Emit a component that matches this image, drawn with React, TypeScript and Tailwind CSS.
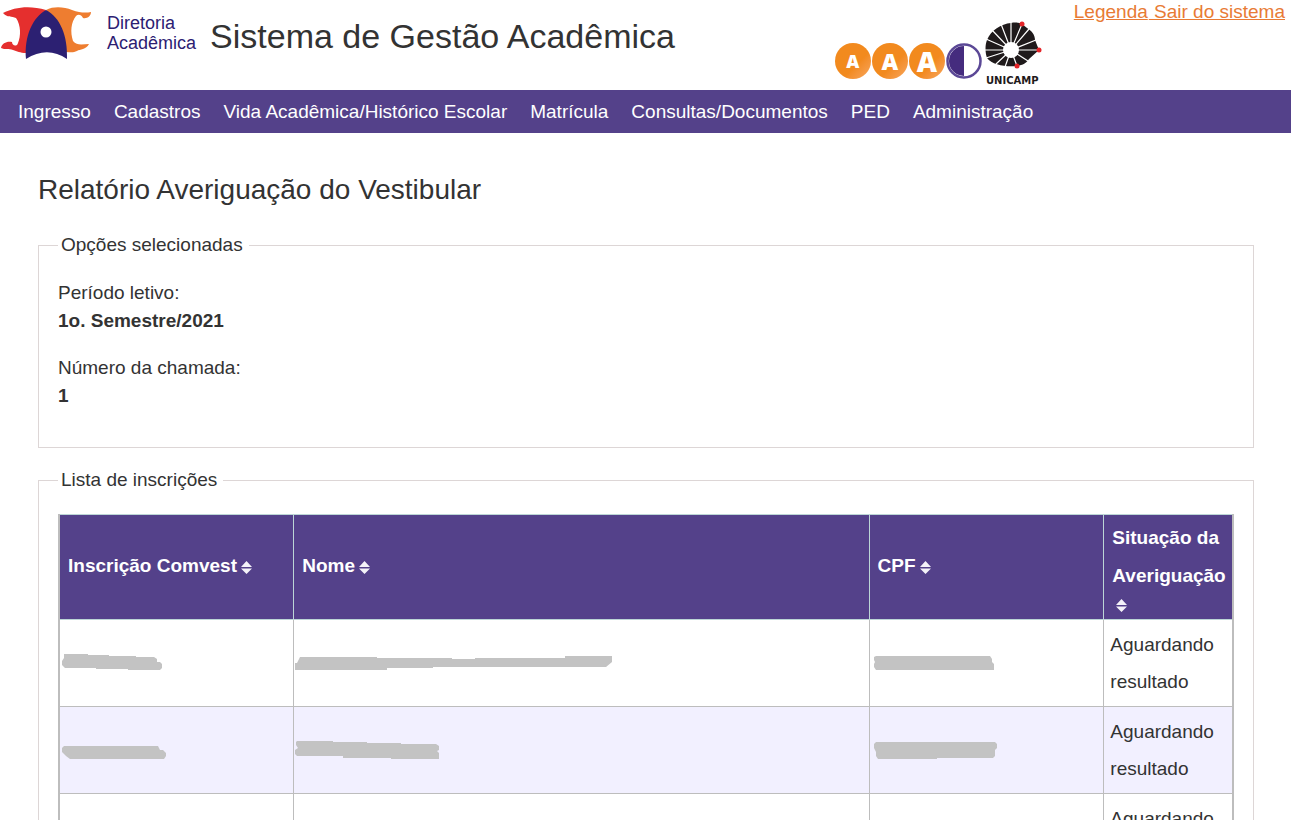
import { useState } from 'react';
import type { ReactNode } from 'react';

const menu = [
  'Ingresso',
  'Cadastros',
  'Vida Acadêmica/Histórico Escolar',
  'Matrícula',
  'Consultas/Documentos',
  'PED',
  'Administração',
];

const columns = [
  { label: 'Inscrição Comvest', width: 'w-[20%]' },
  { label: 'Nome', width: 'w-[49%]' },
  { label: 'CPF', width: 'w-[20%]' },
  { label: 'Situação da Averiguação', width: 'w-[11%]' },
];

// Personal data is never printed, each cell only gets a grey marker stroke
const rows = [
  {
    id: { w: 100, h: 18, d: 'M2 0H26V1H47V2H74V3H92L95 5V8H98L100 10V14L98 16H66V15H34V14H3L0 11V7L2 4Z' },
    name: { w: 317, h: 14, d: 'M5 1H82V2H157V3H180V2H270V0H317V6L311 11H138V12H92V14H0V7H2Z' },
    cpf: { w: 120, h: 14, d: 'M2 0H116L118 3V6L120 8V14H2L0 11V8L1 6L0 4V1Z' },
    status: 'Aguardando resultado',
  },
  {
    id: { w: 104, h: 18, d: 'M2 5H96L98 9H101L104 12V15L102 18H8L4 15L0 11V7Z' },
    name: { w: 144, h: 18, d: 'M2 0H38V1H72V2H106V3H141L144 5V9L142 10L144 12V18H96V17H48V15H2L0 13V9L3 7L1 4V1Z' },
    cpf: { w: 123, h: 18, d: 'M2 1H121L123 3V7L121 9V15L119 17H63V18H4L2 15V11L0 7V3Z' },
    status: 'Aguardando resultado',
  },
  { id: null, name: null, cpf: null, status: 'Aguardando resultado' },
];

type Stroke = { w: number; h: number; d: string } | null;

function Marker({ stroke }: { stroke: Stroke }) {
  if (!stroke) return null;
  return (
    <svg
      width={stroke.w}
      height={stroke.h}
      viewBox={`0 0 ${stroke.w} ${stroke.h}`}
      className="block"
      role="img"
      aria-label="Dado oculto"
    >
      <path d={stroke.d} fill="#c3c3c3" />
    </svg>
  );
}

function DacLogo() {
  return (
    <svg width="92" height="60" viewBox="0 0 92 60" className="shrink-0" aria-hidden="true">
      <path
        d="M3 13C14 7 30 5 46 10L36 30L26 53C20 53 17 51 13 50C9 48 5 50 1 48C2 43 7 41 12 42C12 46 17 47 18 43C21 36 21 25 16 18C12 16 7 18 3 13Z"
        fill="#e52f2e"
      />
      <path
        d="M46 10C54 6 64 7 72 10C80 13 86 13 91 12C91 16 87 19 83 18C81 14 78 14 76 16C71 22 70 32 73 41C77 46 83 44 89 44C86 50 80 49 77 51C73 53 70 52 66 52L58 24Z"
        fill="#ee7d30"
      />
      <path d="M46 10C33 17 24 36 26 59C40 50 54 50 67 59C68 36 60 17 46 10Z" fill="#2c2072" />
      <circle cx="46" cy="32" r="5.5" fill="#fff" />
    </svg>
  );
}

function UnicampLogo() {
  return (
    <svg
      width="60"
      height="66"
      viewBox="0 0 60 66"
      className="shrink-0 overflow-visible"
      role="img"
      aria-label="Unicamp"
    >
      <path
        d="M25 2C30 1 34 2 36 3L41 7C46 10 49 14 49 19L53 29L43 38C40 43 34 45 30 45C20 46 6 44 1 37C-1 31 -1 24 1 19C5 9 15 3 25 2Z"
        fill="#1f1a1b"
      />
      <path
        d="M25 29V1M25 29L15 3M25 29L6 9M25 29L0 18M25 29H-1M25 29L0 37M25 29L10 43M25 29L19 46M25 29L31 45M25 29L42 40M25 29H53M25 29L50 19M25 29L43 8M25 29L36 3"
        stroke="#fff"
        strokeWidth="1.2"
      />
      <circle cx="25" cy="29" r="8" fill="#fff" />
      <circle cx="36" cy="3" r="2.5" fill="#e42529" />
      <circle cx="53" cy="29" r="2.5" fill="#e42529" />
      <circle cx="31" cy="45" r="2.5" fill="#e42529" />
      <text x="0" y="63" fontFamily="DejaVu Sans, sans-serif" fontWeight="700" fontSize="10" fill="#1f1a1b">
        UNICAMP
      </text>
    </svg>
  );
}

function SizeButton({ label, children }: { label: string; children: ReactNode }) {
  return (
    <button
      type="button"
      aria-label={label}
      className="flex h-9 w-9 items-center justify-center rounded-full bg-gradient-to-br from-[#f28a1e] from-60% to-[#f8a75a] font-['Open_Sans',sans-serif] font-extrabold leading-none text-white"
    >
      {children}
    </button>
  );
}

function SortIcon() {
  return (
    <svg width="11" height="13" viewBox="0 0 11 13" className="ml-1 mt-1 shrink-0" aria-hidden="true">
      <path d="M5.5 0L11 6H0ZM5.5 13L0 7.5H11Z" fill="#f4f2f8" />
    </svg>
  );
}

function Panel({ title, children }: { title: string; children: ReactNode }) {
  return (
    <fieldset className="min-w-0 border border-[#ddd6d6] px-[19px]">
      <legend className="pl-[3px] pr-[6px] leading-7">{title}</legend>
      {children}
    </fieldset>
  );
}

export default function App() {
  const [sortBy, setSortBy] = useState('');

  return (
    <div className="min-h-screen bg-white font-['Liberation_Sans',Arial,sans-serif] text-[19px] text-[#333]">
      <header className="flex h-[90px] items-start">
        <DacLogo />
        <div className="ml-[15px] mt-[13px] text-[18px] leading-5 text-[#2c2072]">
          Diretoria
          <br />
          Acadêmica
        </div>
        <h1 className="ml-[14px] mt-4 whitespace-nowrap text-[34px] leading-10">Sistema de Gestão Acadêmica</h1>
        <div className="ml-auto flex items-start">
          <div className="mt-[43px] flex gap-px">
            <SizeButton label="Diminuir fonte">
              <span className="text-[18px]">A</span>
            </SizeButton>
            <SizeButton label="Fonte normal">
              <span className="text-[23px]">A</span>
            </SizeButton>
            <SizeButton label="Aumentar fonte">
              <span className="text-[28px]">A</span>
            </SizeButton>
            <button type="button" aria-label="Alto contraste">
              <svg width="36" height="36" viewBox="0 0 36 36" aria-hidden="true">
                <circle cx="18" cy="18" r="16.5" fill="#fff" stroke="#5b4896" strokeWidth="2.5" />
                <path d="M18 3A15 15 0 0 0 18 33Z" fill="#452c7e" />
              </svg>
            </button>
          </div>
          <div className="ml-1 mt-[21px]">
            <UnicampLogo />
          </div>
        </div>
        <div className="ml-7 mr-[6px] flex whitespace-pre leading-6 text-[#e87b35]">
          <a href="#legenda" className="underline">Legenda</a>
          <a href="#sair" className="ml-px underline">{' Sair do sistema'}</a>
        </div>
      </header>

      <nav className="flex items-center gap-[23px] bg-[#54418a] px-[18px] pb-[7px] pt-2 leading-7 text-white">
        {menu.map((item) => (
          <a key={item} href="#menu" className="whitespace-nowrap">
            {item}
          </a>
        ))}
      </nav>

      <main className="pl-[38px] pr-[37px] pt-[37px]">
        <h2 className="mb-[21px] text-[28px] leading-10">Relatório Averiguação do Vestibular</h2>

        <Panel title="Opções selecionadas">
          <dl className="pb-[37px] pt-5 leading-7">
            <dt>Período letivo:</dt>
            <dd className="mb-[19px] font-bold">1o. Semestre/2021</dd>
            <dt>Número da chamada:</dt>
            <dd className="font-bold">1</dd>
          </dl>
        </Panel>

        <div className="mt-[18px]">
          <Panel title="Lista de inscrições">
            <table className="mt-5 w-full table-fixed border-collapse border-x-2 border-[#bdbdbd]">
              <thead>
                <tr className="bg-[#54418a]">
                  {columns.map((col) => (
                    <th
                      key={col.label}
                      scope="col"
                      className={`${col.width} border border-[#bcd6d6] pb-[7px] pl-2 pt-1 text-left align-middle`}
                    >
                      <button
                        type="button"
                        onClick={() => setSortBy(col.label)}
                        aria-pressed={sortBy === col.label}
                        className="flex flex-wrap items-center text-left font-bold leading-[38px] text-white"
                      >
                        <span>{col.label}</span>
                        <SortIcon />
                      </button>
                    </th>
                  ))}
                </tr>
              </thead>
              <tbody>
                {rows.map((row, i) => (
                  <tr key={i} className="leading-[37px] even:bg-[#f2f0ff]">
                    <td className="border border-[#bdbdbd] px-[2px]"><Marker stroke={row.id} /></td>
                    <td className="border border-[#bdbdbd] px-px"><Marker stroke={row.name} /></td>
                    <td className="border border-[#bdbdbd] px-1"><Marker stroke={row.cpf} /></td>
                    <td className="border border-[#bdbdbd] p-[6px]">{row.status}</td>
                  </tr>
                ))}
              </tbody>
            </table>
          </Panel>
        </div>
      </main>
    </div>
  );
}
